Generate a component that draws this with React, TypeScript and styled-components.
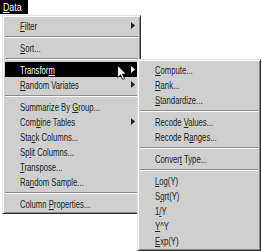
import React from "react";
import styled, { createGlobalStyle } from "styled-components";

const GlobalStyle = createGlobalStyle`
  html, body {
    margin: 0;
    padding: 0;
    background: #ffffff;
  }
`;

const colors = {
  face: "#cfcfcf",
  light: "#e4e4e4",
  white: "#ffffff",
  shadow: "#8a8a8a",
  dark: "#2e2e2e",
  text: "#222222",
  hilite: "#000000",
};

const Screen = styled.div`
  width: 262px;
  height: 251px;
  overflow: hidden;
  font-family: "Liberation Sans", Arial, sans-serif;
  font-size: 11px;
  color: ${colors.text};
`;

const MenuTitle = styled.div`
  width: 28px;
  height: 14px;
  background: ${colors.hilite};
  color: ${colors.white};
  display: flex;
  align-items: center;
  padding-left: 3px;
  box-sizing: border-box;
`;

const Popup = styled.div<{ $width: number }>`
  width: ${(p) => p.$width}px;
  box-sizing: border-box;
  background: ${colors.face};
  border-top: 1px solid ${colors.light};
  border-left: 1px solid ${colors.light};
  border-right: 1px solid ${colors.dark};
  border-bottom: 1px solid ${colors.dark};
  box-shadow: inset 1px 1px ${colors.white}, inset -1px -1px ${colors.shadow};
  padding: 2px;
  display: flex;
  flex-direction: column;
`;

const MainMenu = styled(Popup)`
  margin: 1px 0 0 2px;
`;

const SubMenu = styled(Popup)`
  position: absolute;
  left: calc(100% - 1px);
  top: -3px;
  z-index: 2;
`;

const Item = styled.div<{ $active?: boolean }>`
  position: relative;
  height: 15px;
  display: flex;
  align-items: center;
  padding-left: 15px;
  padding-right: 3px;
  background: ${(p) => (p.$active ? colors.hilite : "transparent")};
  color: ${(p) => (p.$active ? colors.white : colors.text)};
`;

const Label = styled.span<{ $scale?: number }>`
  flex: 1;
  display: inline-block;
  white-space: nowrap;
  transform: scaleX(${(p) => p.$scale ?? 0.7});
  transform-origin: left center;

  u {
    text-underline-offset: 1px;
  }
`;

const Arrow = styled.svg`
  width: 4px;
  height: 7px;
  flex: none;
`;

const Separator = styled.div`
  height: 7px;
  padding-top: 3px;
  box-sizing: border-box;

  &::before {
    content: "";
    display: block;
    height: 1px;
    background: ${colors.shadow};
    border-bottom: 1px solid ${colors.white};
  }
`;

const Pointer = styled.svg`
  position: absolute;
  left: 112px;
  top: 3px;
  width: 10px;
  height: 15px;
  z-index: 3;
`;

type Entry = { label: string; sub?: boolean } | "-";

const mainItems: Entry[] = [
  { label: "&Filter", sub: true },
  "-",
  { label: "&Sort..." },
  "-",
  { label: "Transfor&m", sub: true },
  { label: "&Random Variates", sub: true },
  "-",
  { label: "Summarize By &Group..." },
  { label: "Com&bine Tables", sub: true },
  { label: "Sta&ck Columns..." },
  { label: "Sp&lit Columns..." },
  { label: "&Transpose..." },
  { label: "Ra&ndom Sample..." },
  "-",
  { label: "Column &Properties..." },
];

const transformItems: Entry[] = [
  { label: "&Compute..." },
  { label: "&Rank..." },
  { label: "&Standardize..." },
  "-",
  { label: "Recode &Values..." },
  { label: "Recode R&anges..." },
  "-",
  { label: "Conver&t Type..." },
  "-",
  { label: "&Log(Y)" },
  { label: "S&qrt(Y)" },
  { label: "1&/Y" },
  { label: "&Y^Y" },
  { label: "&Exp(Y)" },
];

// "&" marks the mnemonic letter, like a Windows menu resource
const Mnemonic: React.FC<{ text: string }> = ({ text }) => {
  const i = text.indexOf("&");
  if (i < 0) return <>{text}</>;
  return (
    <>
      {text.slice(0, i)}
      <u>{text[i + 1]}</u>
      {text.slice(i + 2)}
    </>
  );
};

const SubArrow: React.FC<{ color: string }> = ({ color }) => (
  <Arrow viewBox="0 0 4 7">
    <polygon points="0,0 4,3.5 0,7" fill={color} />
  </Arrow>
);

const MouseCursor = () => (
  <Pointer viewBox="0 0 12 19">
    <path
      d="M0.5 0.5 L0.5 16 L4.2 12.4 L6.8 18.3 L9.2 17.3 L6.6 11.5 L11.5 11.5 Z"
      fill="#ffffff"
      stroke="#000000"
      strokeWidth="1"
      strokeLinejoin="miter"
    />
  </Pointer>
);

const MenuList: React.FC<{ items: Entry[]; activeIndex?: number; children?: React.ReactNode }> = ({
  items,
  activeIndex,
  children,
}) => (
  <>
    {items.map((entry, idx) =>
      entry === "-" ? (
        <Separator key={idx} />
      ) : (
        <Item key={idx} $active={idx === activeIndex}>
          <Label>
            <Mnemonic text={entry.label} />
          </Label>
          {entry.sub && <SubArrow color={idx === activeIndex ? colors.white : colors.text} />}
          {idx === activeIndex && children}
        </Item>
      )
    )}
  </>
);

export default function App() {
  return (
    <Screen>
      <GlobalStyle />
      <MenuTitle>
        <Label $scale={0.8}>
          <Mnemonic text="&Data" />
        </Label>
      </MenuTitle>
      <MainMenu $width={139}>
        <MenuList items={mainItems} activeIndex={4}>
          <MouseCursor />
          <SubMenu $width={124}>
            <MenuList items={transformItems} />
          </SubMenu>
        </MenuList>
      </MainMenu>
    </Screen>
  );
}
